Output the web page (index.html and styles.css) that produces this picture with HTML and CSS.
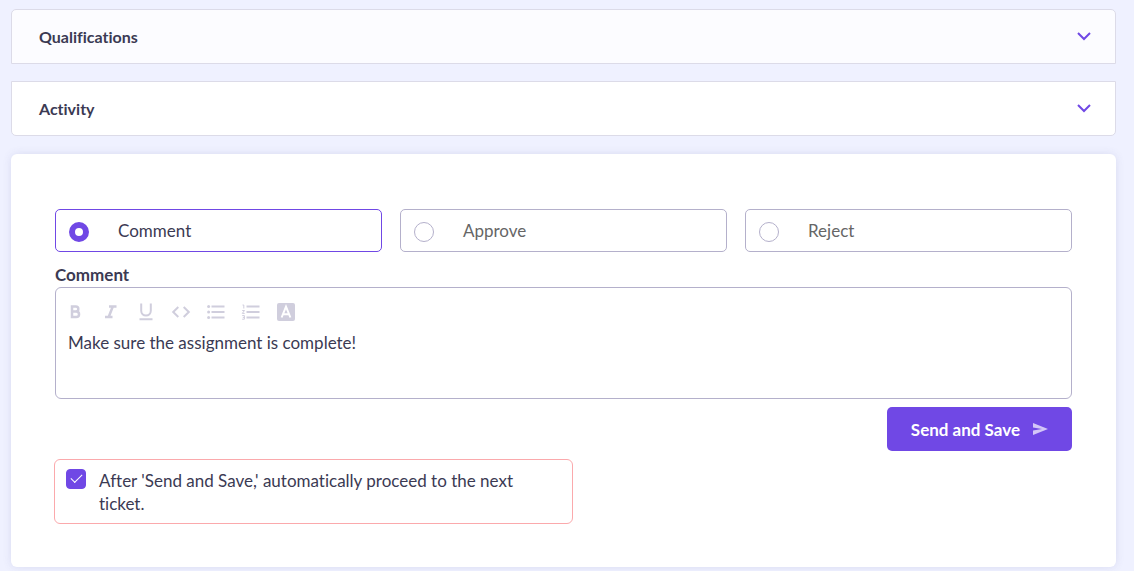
FILE: index.html
```html
<!DOCTYPE html>
<html lang="en">
<head>
    <meta charset="UTF-8">
    <meta name="viewport" content="width=device-width, initial-scale=1.0">
    <title>Ticket Review</title>
    <link rel="stylesheet" href="styles.css">
</head>
<body>
    <main class="main-container">
        <div class="accordion">
            <button type="button" class="accordion-item">
                Qualifications
                <svg class="chevron" viewBox="0 0 14 10"><path d="M1 1l6 6 6-6"/></svg>
            </button>
            <button type="button" class="accordion-item">
                Activity
                <svg class="chevron" viewBox="0 0 14 10"><path d="M1 1l6 6 6-6"/></svg>
            </button>
        </div>

        <form class="comment-card">
            <div class="options">
                <label class="option">
                    <input type="radio" name="action" value="comment" checked>
                    <span>Comment</span>
                </label>
                <label class="option">
                    <input type="radio" name="action" value="approve">
                    <span>Approve</span>
                </label>
                <label class="option">
                    <input type="radio" name="action" value="reject">
                    <span>Reject</span>
                </label>
            </div>

            <label class="field-label" for="comment">Comment</label>
            <div class="editor">
                <div class="toolbar">
                    <button type="button" aria-label="Bold">
                        <svg viewBox="0 0 20 20"><path class="line thick" d="M6 4.500h3.800a2.500 2.500 0 0 1 0 5H6zM6 9.500h4.300a2.700 2.700 0 0 1 0 5.500H6z"/></svg>
                    </button>
                    <button type="button" aria-label="Italic">
                        <svg viewBox="0 0 20 20"><path class="line thick" d="M8 4.500h7.500M4 15h7.500M11.800 4.500L7.700 15"/></svg>
                    </button>
                    <button type="button" aria-label="Underline">
                        <svg viewBox="0 0 20 20"><path class="line" d="M5.2 1.5v7.3a4.8 4.8 0 0 0 9.6 0V1.5M3.5 17.3h13"/></svg>
                    </button>
                    <button type="button" aria-label="Code">
                        <svg viewBox="0 0 20 20"><path class="line" d="M7.3 5L2.2 10l5.1 5M12.7 5l5.1 5-5.1 5"/></svg>
                    </button>
                    <button type="button" aria-label="Bulleted list">
                        <svg viewBox="0 0 20 20"><path class="line" d="M5.500 4.500h13M5.500 10h13M5.500 15.500h13"/><circle cx="2.600" cy="4.500" r="1.500"/><circle cx="2.600" cy="10" r="1.500"/><circle cx="2.600" cy="15.500" r="1.500"/></svg>
                    </button>
                    <button type="button" aria-label="Numbered list">
                        <svg viewBox="0 0 20 20"><path class="line" d="M5.500 4.500h13M5.500 10h13M5.500 15.500h13"/><path class="line thin" d="M1.500 3h1.300v3.500M1.200 8.500h2.300L1.300 11.400h2.400M1.200 13.600h2.200v3.600H1.200M1.800 15.400h1.600"/></svg>
                    </button>
                    <button type="button" aria-label="Text color">
                        <svg viewBox="0 0 20 20"><rect x="1" y="1" width="18" height="18" rx="2"/><path class="line light" d="M5.600 15.500L10 4.600l4.400 10.900M7.200 12.300h5.600"/></svg>
                    </button>
                </div>
                <textarea id="comment" name="comment">Make sure the assignment is complete!</textarea>
            </div>

            <button type="submit" class="send-button">
                Send and Save
                <svg class="send-icon" viewBox="0 0 16 14"><path d="M1 1l15 6-15 6V8.500l9-1.500-9-1.500z"/></svg>
            </button>

            <label class="next-ticket">
                <input type="checkbox" name="next" checked>
                <span>After 'Send and Save,' automatically proceed to the next ticket.</span>
            </label>
        </form>
    </main>
</body>
</html>
```
FILE: styles.css
```css
* {
    box-sizing: border-box;
}

body {
    margin: 0;
    font-family: Lato, "Open Sans", sans-serif;
    font-size: 17px;
    font-variant-ligatures: none;
    color: #3b3a53;
    background-color: #eff1ff;
}

button,
textarea {
    font: inherit;
    color: inherit;
}

.main-container {
    padding: 9px 18px 4px 11px;
}

.accordion {
    display: flex;
    flex-direction: column;
    gap: 17px;
    margin-bottom: 18px;
}

.accordion-item {
    display: flex;
    align-items: center;
    justify-content: space-between;
    height: 55px;
    padding: 0 24px 0 27px;
    border: 1px solid #dcdbe8;
    background-color: #fff;
    font-size: 16px;
    font-weight: 700;
    cursor: pointer;
}

.accordion-item:first-child {
    border-radius: 5px 5px 0 0;
    background-color: #fcfcff;
}

.accordion-item:last-child {
    border-radius: 0 0 5px 5px;
}

.chevron {
    width: 14px;
    height: 10px;
    fill: none;
    stroke: #7048e5;
    stroke-width: 2;
}

.comment-card {
    display: flex;
    flex-direction: column;
    padding: 55px 44px 43px;
    border-radius: 6px;
    background-color: #fff;
    box-shadow: 0 0 8px rgba(80, 80, 150, 0.13);
}

.options {
    display: grid;
    grid-template-columns: repeat(3, 1fr);
    gap: 18px;
    margin-bottom: 11px;
}

.option {
    display: flex;
    align-items: center;
    gap: 29px;
    height: 43px;
    padding: 0 13px;
    border: 1px solid #b4b0cb;
    border-radius: 5px;
    color: #666;
    cursor: pointer;
}

.option:has(input:checked) {
    border-color: #7048e5;
    color: #3b3a53;
}

.option input {
    appearance: none;
    width: 20px;
    height: 20px;
    margin: 3px 0 0;
    border: 1px solid #b4b0cb;
    border-radius: 50%;
}

.option input:checked {
    border: 6px solid #7048e5;
}

.field-label {
    margin-bottom: 1px;
    font-weight: 700;
    line-height: 23px;
}

.editor {
    padding: 14px 10px 8px;
    border: 1px solid #b4b0cb;
    border-radius: 6px;
}

.toolbar {
    display: flex;
    gap: 15px;
}

.toolbar button {
    width: 20px;
    height: 20px;
    padding: 0;
    border: none;
    background: none;
    cursor: pointer;
}

.toolbar svg {
    display: block;
    fill: #d0cedd;
}

.toolbar .line {
    fill: none;
    stroke: #d0cedd;
    stroke-width: 2;
}

.toolbar .thick {
    stroke-width: 2.5;
}

.toolbar .thin {
    stroke-width: 1;
}

.toolbar .light {
    stroke: #fff;
}

.editor textarea {
    display: block;
    width: 100%;
    height: 68px;
    padding: 9px 2px;
    border: none;
    outline: none;
    resize: none;
    background: none;
    line-height: 23px;
}

.send-button {
    display: flex;
    align-items: center;
    align-self: flex-end;
    gap: 12px;
    height: 44px;
    margin: 8px 0;
    padding: 0 24px;
    border: none;
    border-radius: 5px;
    background-color: #7048e5;
    color: #fff;
    font-weight: 700;
    cursor: pointer;
}

.send-icon {
    width: 16px;
    height: 14px;
    fill: #d3c6f7;
}

.next-ticket {
    display: flex;
    align-items: flex-start;
    gap: 13px;
    width: 51%;
    margin-left: -1px;
    padding: 9px 40px 8px 11px;
    border: 1px solid #fba9ac;
    border-radius: 6px;
    line-height: 23px;
    cursor: pointer;
}

.next-ticket input {
    appearance: none;
    display: grid;
    place-items: center;
    flex-shrink: 0;
    width: 20px;
    height: 20px;
    margin: 0;
    border: 1px solid #b4b0cb;
    border-radius: 4px;
}

.next-ticket input:checked {
    border-color: #7048e5;
    background-color: #7048e5;
}

.next-ticket input:checked::before {
    content: "";
    width: 10px;
    height: 5px;
    margin-bottom: 4px;
    border: solid #fff;
    border-width: 0 0 1px 1px;
    transform: rotate(-45deg);
}
```
